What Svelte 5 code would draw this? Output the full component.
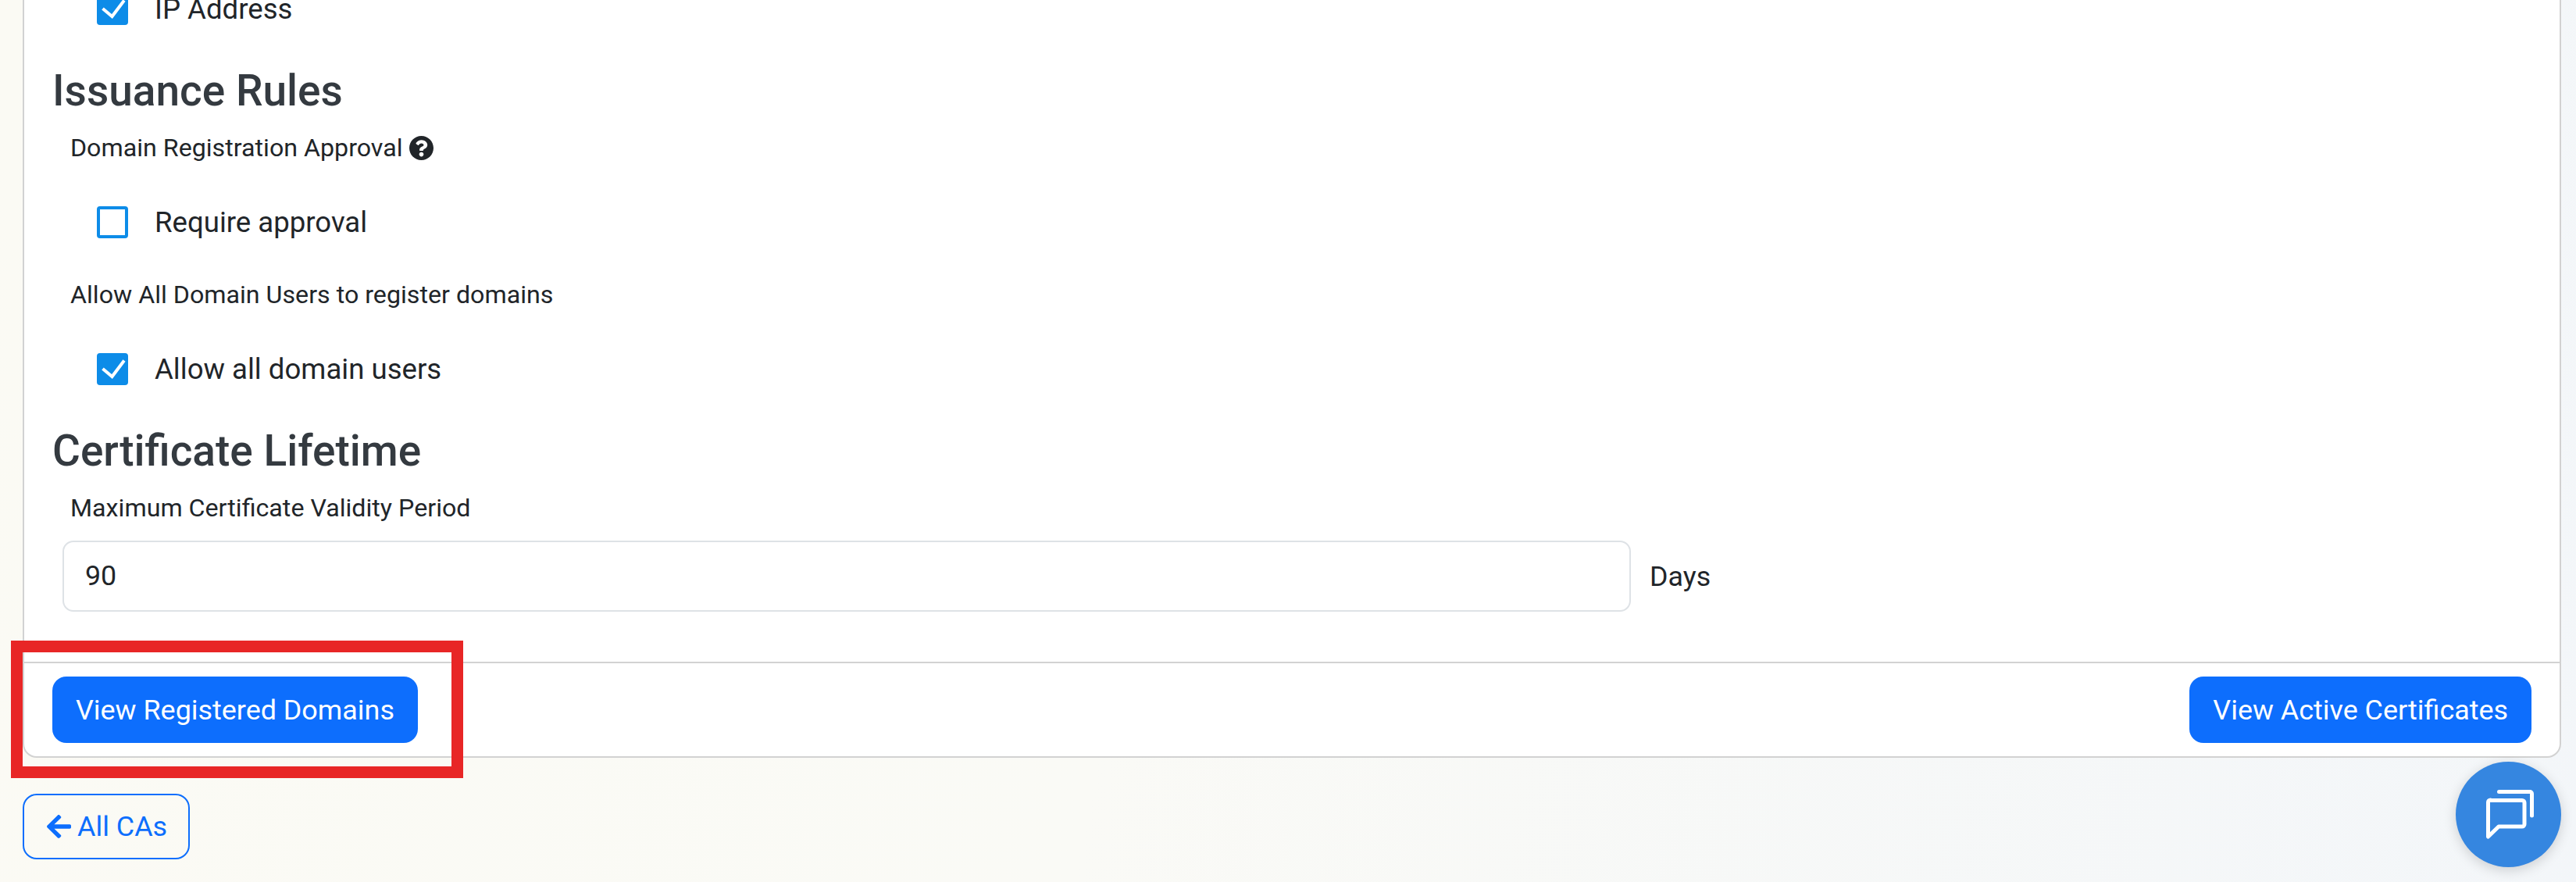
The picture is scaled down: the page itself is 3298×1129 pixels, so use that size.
<script>
  const issuance = [
    { label: 'Domain Registration Approval', help: true, text: 'Require approval', checked: false },
    { label: 'Allow All Domain Users to register domains', help: false, text: 'Allow all domain users', checked: true }
  ];
</script>

{#snippet check(checked, text)}
  <div class="check">
    <span class="box" class:on={checked}>
      {#if checked}
        <svg viewBox="0 0 40 41" width="40" height="41"><path d="M7.5 20 L19.5 30 L35 9.5" fill="none" stroke="#fff" stroke-width="4" /></svg>
      {/if}
    </span>
    <span>{text}</span>
  </div>
{/snippet}

<div class="page">
  <section class="card">
    <div class="body">
      {@render check(true, 'IP Address')}
      <h3 class="rules">Issuance Rules</h3>
      {#each issuance as item}
        <div class="label">
          {item.label}
          {#if item.help}
            <svg class="help" viewBox="8 8 496 496" width="31" height="31"><path fill="#212529" d="M504 256c0 136.997-111.043 248-248 248S8 392.997 8 256C8 119.083 119.043 8 256 8s248 111.083 248 248zM262.655 90c-54.497 0-89.255 22.957-116.549 63.758-3.536 5.286-2.353 12.415 2.715 16.258l34.699 26.31c5.205 3.947 12.621 3.008 16.665-2.122 17.864-22.658 30.113-35.797 57.303-35.797 20.429 0 45.698 13.148 45.698 32.958 0 14.976-12.363 22.667-32.534 33.976C247.128 238.528 216 254.941 216 296v4c0 6.627 5.373 12 12 12h56c6.627 0 12-5.373 12-12v-1.333c0-28.462 83.186-29.647 83.186-106.667 0-58.002-60.165-102-116.531-102zM256 338c-25.365 0-46 20.635-46 46 0 25.364 20.635 46 46 46s46-20.636 46-46c0-25.365-20.635-46-46-46z"/></svg>
          {/if}
        </div>
        {@render check(item.checked, item.text)}
      {/each}
      <h3>Certificate Lifetime</h3>
      <div class="label">Maximum Certificate Validity Period</div>
      <div class="field">
        <div class="input">90</div>
        <span>Days</span>
      </div>
    </div>
    <footer>
      <button>View Registered Domains</button>
      <button>View Active Certificates</button>
    </footer>
  </section>
  <div class="back-row">
    <button class="back">
      <svg viewBox="0 0 448 512" width="31" height="36"><path fill="#0d6efd" d="M257.5 445.1l-22.2 22.2c-9.4 9.4-24.6 9.4-33.9 0L7 273c-9.4-9.4-9.4-24.6 0-33.9L201.4 44.7c9.4-9.4 24.6-9.4 33.9 0l22.2 22.2c9.5 9.5 9.3 25-.4 34.3L136.6 216H424c13.3 0 24 10.7 24 24v32c0 13.3-10.7 24-24 24H136.6l120.5 114.8c9.8 9.3 10 24.8.4 34.3z"/></svg>
      All CAs
    </button>
  </div>
  <div class="highlight"></div>
  <div class="chat">
    <svg viewBox="0 0 135 135" width="135" height="135" fill="none" stroke="#fff" stroke-width="5" stroke-linecap="round" stroke-linejoin="round">
      <path d="M43 49.5 H85 a3 3 0 0 1 3 3 V80 a3 3 0 0 1 -3 3 H55 L41.5 96 V52 a3 3 0 0 1 3 -3 Z" />
      <path d="M55.5 38.5 H95 a2.5 2.5 0 0 1 2.5 2.5 V69" />
    </svg>
  </div>
</div>

<style>
  :global(body) {
    margin: 0;
    background: #fff;
  }
  .page {
    position: relative;
    box-sizing: border-box;
    width: 3298px;
    height: 1129px;
    overflow: hidden;
    display: flex;
    flex-direction: column;
    justify-content: flex-end;
    padding: 0 19px 29px 29px;
    background: linear-gradient(100deg, #fbfaf4 0%, #fafaf6 45%, #f3f6f9 100%);
    font-family: Roboto, sans-serif;
    color: #212529;
  }
  .card {
    flex: none;
    box-sizing: border-box;
    background: #fff;
    border: 2px solid #d2d2d2;
    border-radius: 18px;
  }
  .body {
    padding: 40px 36px 64px 36px;
  }
  .check {
    display: flex;
    align-items: center;
    gap: 34px;
    height: 41px;
    margin-left: 57px;
    font-size: 36.6px;
    line-height: 41px;
  }
  .box {
    box-sizing: border-box;
    flex: none;
    width: 40px;
    height: 41px;
    border: 4px solid #0d8ce8;
    border-radius: 4px;
    background: #fff;
  }
  .box.on {
    background: #0d8ce8;
    border: 0;
  }
  .box svg {
    display: block;
  }
  h3 {
    margin: 51px 0 0;
    font-size: 55px;
    font-weight: 500;
    line-height: 66px;
    color: #343a40;
  }
  h3.rules {
    margin-top: 51px;
  }
  .label {
    display: flex;
    align-items: center;
    gap: 8px;
    height: 37px;
    margin: 22px 0 56px 23px;
    font-size: 32.2px;
    line-height: 37px;
  }
  .check + .label {
    margin-top: 54px;
  }
  .field {
    display: flex;
    align-items: center;
    gap: 24px;
    margin: -33px 0 0 13px;
    font-size: 35.8px;
  }
  .input {
    box-sizing: border-box;
    width: 2008px;
    height: 91px;
    padding: 0 27px;
    border: 2px solid #dee2e6;
    border-radius: 14px;
    font-size: 35.8px;
    line-height: 87px;
  }
  footer {
    display: flex;
    justify-content: space-between;
    padding: 17px 36px;
    border-top: 2px solid #d2d2d2;
  }
  button {
    box-sizing: border-box;
    height: 85px;
    padding: 0 30px;
    border: 0;
    border-radius: 18px;
    background: #0d6efd;
    color: #fff;
    font-family: inherit;
    font-size: 35.9px;
    white-space: nowrap;
  }
  .back-row {
    display: flex;
    margin-top: 46px;
  }
  button.back {
    display: flex;
    align-items: center;
    gap: 8px;
    width: 214px;
    height: 84px;
    padding: 0 0 0 29px;
    border: 2px solid #0d6efd;
    background: transparent;
    color: #0d6efd;
  }
  .highlight {
    position: absolute;
    left: 14px;
    top: 820px;
    box-sizing: border-box;
    width: 579px;
    height: 176px;
    border: 15px solid #e82626;
  }
  .chat {
    position: absolute;
    left: 3144px;
    top: 975px;
    width: 135px;
    height: 135px;
    border-radius: 50%;
    background: #3586e0;
    box-shadow: 0 4px 16px rgba(0, 0, 0, 0.16);
  }
  .chat svg {
    display: block;
  }
</style>
